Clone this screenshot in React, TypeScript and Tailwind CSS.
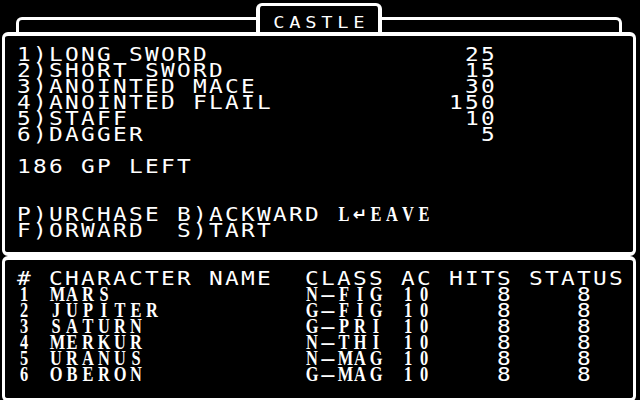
import React from 'react';
import clsx from 'clsx';

const items = [
  { label: '1)LONG SWORD', price: '25' },
  { label: '2)SHORT SWORD', price: '15' },
  { label: '3)ANOINTED MACE', price: '30' },
  { label: '4)ANOINTED FLAIL', price: '150' },
  { label: '5)STAFF', price: '10' },
  { label: '6)DAGGER', price: '5' },
];

const party = [
  { n: '1', name: 'MARS', cls: 'N-FIG' },
  { n: '2', name: 'JUPITER', cls: 'G-FIG' },
  { n: '3', name: 'SATURN', cls: 'G-PRI' },
  { n: '4', name: 'MERKUR', cls: 'N-THI' },
  { n: '5', name: 'URANUS', cls: 'N-MAG' },
  { n: '6', name: 'OBERON', cls: 'G-MAG' },
];

// one 16px cell per character, like the old text screen
function Chars({ s, serif = false, small = false }: { s: string; serif?: boolean; small?: boolean }) {
  return (
    <>
      {s.split('').map((c, i) => (
        <span
          key={i}
          className={clsx(
            'block w-4 shrink-0 whitespace-pre text-center',
            serif
              ? "font-['Liberation_Serif',serif] text-[21px] font-bold"
              : small
              ? "font-['DejaVu_Sans_Mono',monospace] text-[15px]"
              : "font-['DejaVu_Sans_Mono',monospace] text-[19px]",
            c === '-' ? 'scale-x-[2.4]' : serif ? 'scale-x-[0.78]' : small ? 'scale-x-125' : 'scale-x-[1.2]'
          )}
        >
          {c}
        </span>
      ))}
    </>
  );
}

function Line({ children }: { children?: React.ReactNode }) {
  return <div className="flex h-4 leading-4">{children}</div>;
}

export default function App() {
  return (
    <div className="h-[400px] w-[640px] overflow-hidden bg-black text-white">
      <div className="ml-[16px] mt-[17px] flex h-[15px] w-[606px] justify-center rounded-t-[6px] border-x-[3px] border-t-[3px] border-white">
        <div className="-mt-[17px] flex h-[29px] w-[126px] shrink-0 justify-center rounded-t-[6px] border-x-4 border-t-[3px] border-white bg-black pt-[9px]">
          <Line>
            <Chars s="CASTLE" small />
          </Line>
        </div>
      </div>

      <div className="ml-[2px] w-[634px] rounded-[6px] border-x-[3px] border-y-4 border-white pb-[14px] pl-[11px] pt-[10px]">
        {items.map((it) => (
          <Line key={it.label}>
            <Chars s={it.label.padEnd(30 - it.price.length) + it.price} />
          </Line>
        ))}
        <Line />
        <Line>
          <Chars s="186 GP LEFT" />
        </Line>
        <Line />
        <Line />
        <Line>
          <Chars s="P)URCHASE B)ACKWARD " />
          <Chars s="L" serif />
          <span className="block w-4 shrink-0 text-center font-['DejaVu_Sans',sans-serif] text-[17px] font-bold">
            {'\u21b5'}
          </span>
          <Chars s="EAVE" serif />
        </Line>
        <Line>
          <Chars s="F)ORWARD  S)TART" />
        </Line>
      </div>

      <div className="ml-[2px] w-[634px] rounded-[6px] border-x-[3px] border-y-4 border-white pb-[16px] pl-[11px] pt-[10px]">
        <Line>
          <Chars s="# CHARACTER NAME  CLASS AC HITS STATUS" />
        </Line>
        {party.map((p) => (
          <Line key={p.n}>
            <Chars s={p.n + ' '} serif />
            <Chars s={p.name.padEnd(16)} serif />
            <Chars s={p.cls + ' 10'} serif />
            <Chars s="    8    8" />
          </Line>
        ))}
      </div>
    </div>
  );
}
